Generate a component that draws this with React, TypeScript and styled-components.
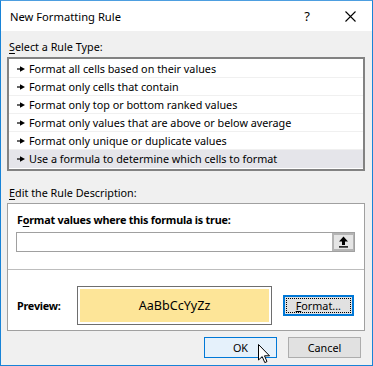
import { createGlobalStyle, styled } from 'styled-components';

const rules = [
  'Format all cells based on their values',
  'Format only cells that contain',
  'Format only top or bottom ranked values',
  'Format only values that are above or below average',
  'Format only unique or duplicate values',
  'Use a formula to determine which cells to format',
];

const Global = createGlobalStyle`
  html, body {
    margin: 0;
    padding: 0;
    background: #ffffff;
  }
  * {
    box-sizing: border-box;
  }
`;

const RuleArrow = () => (
  <svg width="8" height="6" viewBox="0 0 8 6">
    <rect x="0" y="2.4" width="4" height="1.2" fill="#000" />
    <polygon points="3,0.3 8,3 3,5.7" fill="#000" />
  </svg>
);

const UpArrow = () => (
  <svg width="11" height="12" viewBox="0 0 11 12">
    <polygon points="5.5,0.5 10,5.5 7,5.5 7,9 4,9 4,5.5 1,5.5" fill="#000" />
    <rect x="1" y="10.2" width="9" height="1.4" fill="#000" />
  </svg>
);

const CloseIcon = () => (
  <svg width="11" height="11" viewBox="0 0 11 11">
    <path d="M0.5 0.5 L10.5 10.5 M10.5 0.5 L0.5 10.5" stroke="#000" strokeWidth="1.1" />
  </svg>
);

const Cursor = () => (
  <svg width="13" height="20" viewBox="0 0 13 20">
    <path
      d="M0.5 0.5 L0.5 16 L4.2 12.6 L6.8 18.6 L9 17.6 L6.5 11.8 L11.5 11.8 Z"
      fill="#fff"
      stroke="#000"
      strokeWidth="1"
      strokeLinejoin="round"
    />
  </svg>
);

const App = () => {
  return (
    <>
      <Global />
      <Window>
        <TitleBar>
          <Title>New Formatting Rule</Title>
          <TitleButtons>
            <Help>?</Help>
            <CloseIcon />
          </TitleButtons>
        </TitleBar>
        <Body>
          <SectionLabel>
            <u>S</u>elect a Rule Type:
          </SectionLabel>
          <ListBox>
            {rules.map((rule, i) => (
              <RuleRow key={rule} $selected={i === rules.length - 1}>
                <RuleArrow />
                <span>{rule}</span>
              </RuleRow>
            ))}
          </ListBox>
          <SectionLabel $gap={14}>
            <u>E</u>dit the Rule Description:
          </SectionLabel>
          <DescBox>
            <FormulaPart>
              <BoldLabel>
                F<u>o</u>rmat values where this formula is true:
              </BoldLabel>
              <FormulaInput>
                <RefButton>
                  <UpArrow />
                </RefButton>
              </FormulaInput>
            </FormulaPart>
            <PreviewPart>
              <BoldLabel>Preview:</BoldLabel>
              <PreviewFrame>
                <PreviewFill>AaBbCcYyZz</PreviewFill>
              </PreviewFrame>
              <FormatButton>
                <span>
                  <u>F</u>ormat...
                </span>
              </FormatButton>
            </PreviewPart>
          </DescBox>
          <Footer>
            <DialogButton $primary>
              OK
              <CursorSpot>
                <Cursor />
              </CursorSpot>
            </DialogButton>
            <DialogButton>Cancel</DialogButton>
          </Footer>
        </Body>
      </Window>
    </>
  );
};

const Window = styled.div`
  width: 373px;
  height: 366px;
  border: 1px solid #1883d7;
  border-top-color: #4d9ee0;
  background: #f0f0f0;
  font-family: 'Noto Sans', 'Open Sans', sans-serif;
  font-size: 10.8px;
  color: #000;
  display: flex;
  flex-direction: column;
  overflow: hidden;
`;

const TitleBar = styled.div`
  height: 30px;
  background: #ffffff;
  display: flex;
  align-items: center;
  justify-content: space-between;
  padding: 0 16px 0 9px;
`;

const Title = styled.div`
  font-size: 11.2px;
  color: #000;
`;

const TitleButtons = styled.div`
  display: flex;
  align-items: center;
  gap: 35px;
`;

const Help = styled.span`
  font-size: 13px;
  line-height: 1;
`;

const Body = styled.div`
  flex: 1;
  padding: 8px 7px 0 6px;
  display: flex;
  flex-direction: column;
`;

const SectionLabel = styled.div<{ $gap?: number }>`
  height: 16px;
  line-height: 16px;
  padding-left: 2px;
  margin-top: ${p => p.$gap ?? 0}px;
  margin-bottom: 2px;
  u {
    text-decoration-thickness: 1px;
    text-underline-offset: 2px;
  }
`;

const ListBox = styled.div`
  width: 358px;
  border: 2px solid #828282;
  background: #ffffff;
  padding: 1px 0;
  display: flex;
  flex-direction: column;
`;

const RuleRow = styled.div<{ $selected?: boolean }>`
  height: 18px;
  display: flex;
  align-items: center;
  gap: 4px;
  padding-left: 8px;
  background: ${p => (p.$selected ? '#e5e5ea' : '#ffffff')};
  border-bottom: 1px solid ${p => (p.$selected ? '#e5e5ea' : '#f0f0f0')};
  white-space: nowrap;
  svg {
    margin-top: 1px;
  }
`;

const DescBox = styled.div`
  width: 358px;
  border: 1px solid #a0a0a0;
  background: #ffffff;
  display: flex;
  flex-direction: column;
`;

const FormulaPart = styled.div`
  padding: 8px 9px 17px 8px;
  border-bottom: 1px solid #bdbdbd;
`;

const BoldLabel = styled.div`
  font-weight: 700;
  letter-spacing: -0.22px;
  height: 16px;
  line-height: 16px;
  padding-left: 1px;
  white-space: nowrap;
  u {
    text-underline-offset: 2px;
  }
`;

const FormulaInput = styled.div`
  margin-top: 4px;
  height: 20px;
  border: 1px solid #a0a0a0;
  background: #ffffff;
  display: flex;
  justify-content: flex-end;
`;

const RefButton = styled.div`
  width: 22px;
  height: 100%;
  border: 2px solid #b4b4b4;
  border-right-width: 1px;
  background: #e5e5e5;
  display: flex;
  align-items: center;
  justify-content: center;
`;

const PreviewPart = styled.div`
  padding: 16px 10px 5px 8px;
  display: flex;
  align-items: center;
  ${BoldLabel} {
    width: 63px;
  }
`;

const PreviewFrame = styled.div`
  width: 199px;
  height: 39px;
  border: 1px solid #6e6e6e;
  padding: 2px;
  background: #ffffff;
`;

const PreviewFill = styled.div`
  height: 100%;
  background: #fde598;
  display: flex;
  align-items: center;
  justify-content: center;
  font-size: 12.6px;
`;

const FormatButton = styled.div`
  margin-left: 11px;
  width: 73px;
  height: 21px;
  border: 2px solid #0078d7;
  background: #e1e1e1;
  padding: 1px;
  span {
    display: flex;
    align-items: center;
    justify-content: center;
    height: 100%;
    border: 1px dotted #000;
  }
`;

const Footer = styled.div`
  display: flex;
  justify-content: flex-end;
  gap: 11px;
  margin-top: 6px;
  padding-right: 4px;
`;

const DialogButton = styled.div<{ $primary?: boolean }>`
  position: relative;
  width: 73px;
  height: 21px;
  border: 1px solid ${p => (p.$primary ? '#0078d7' : '#adadad')};
  background: ${p => (p.$primary ? '#e5f1fb' : '#e1e1e1')};
  display: flex;
  align-items: center;
  justify-content: center;
`;

const CursorSpot = styled.div`
  position: absolute;
  left: 53px;
  top: 6px;
  line-height: 0;
`;

export default App;
